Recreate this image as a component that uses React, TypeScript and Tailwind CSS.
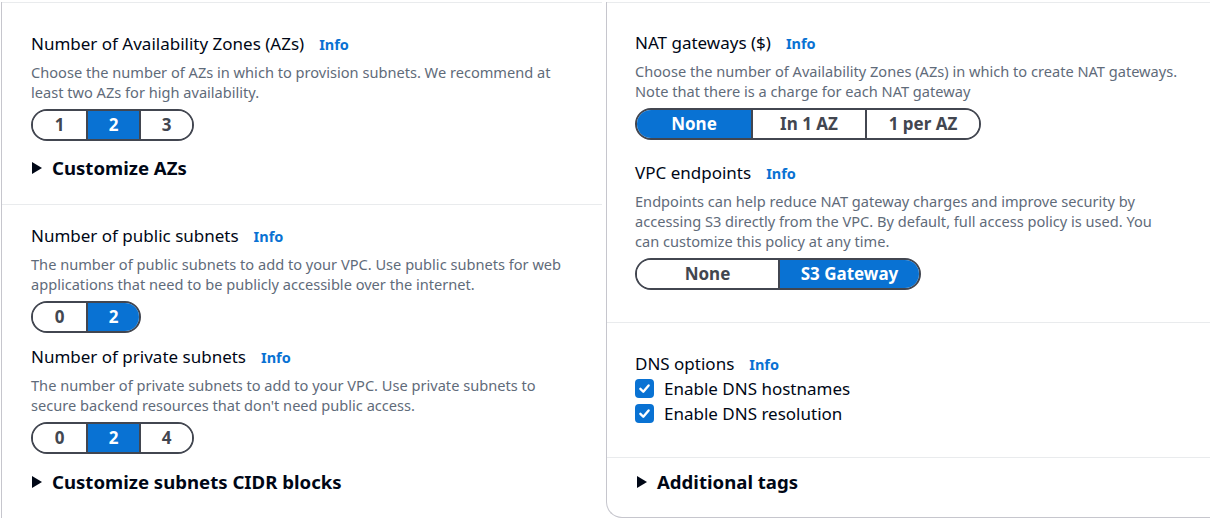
import React from "react";

const font = { fontFamily: '"Noto Sans", "Open Sans", Arial, sans-serif' };

function Info() {
  return <a className="ml-[15px] text-[14.5px] font-bold leading-[22px] text-[#0972d3]">Info</a>;
}

function Label({ children }: { children: React.ReactNode }) {
  return (
    <div className="flex items-baseline text-[17px] leading-[22px] text-[#000716]">
      <span>{children}</span>
      <Info />
    </div>
  );
}

function Desc({ children, className }: { children: React.ReactNode; className?: string }) {
  return (
    <p className={"mt-[7px] text-[14.6px] leading-[20px] text-[#5f6b7a] " + (className ?? "")}>{children}</p>
  );
}

interface SegmentedProps {
  options: string[];
  selected: number;
  segWidth: string;
  className?: string;
}

function Segmented({ options, selected, segWidth, className }: SegmentedProps) {
  return (
    <div className={"flex h-[32px] w-fit overflow-hidden rounded-full border-2 border-[#424650] " + (className ?? "")}>
      {options.map((opt, i) => (
        <div
          key={opt}
          className={
            "flex items-center justify-center text-[17px] font-bold " +
            segWidth +
            (i > 0 ? " border-l-2 border-[#424650]" : "") +
            (i === selected ? " bg-[#0972d3] text-white" : " bg-white text-[#424650]")
          }
        >
          {opt}
        </div>
      ))}
    </div>
  );
}

function Expand({ children, className }: { children: React.ReactNode; className?: string }) {
  return (
    <div className={"flex h-[24px] items-center " + (className ?? "")}>
      <svg width="12" height="14" viewBox="0 0 12 14" className="mr-[9px]">
        <polygon points="1,1 11,7 1,13" fill="#000716" />
      </svg>
      <span className="text-[18.6px] font-bold leading-[24px] text-[#000716]">{children}</span>
    </div>
  );
}

function Checkbox({ label }: { label: string }) {
  return (
    <div className="flex h-[25px] items-center">
      <span className="flex h-[19px] w-[19px] items-center justify-center rounded-[4px] bg-[#0972d3]">
        <svg width="13" height="13" viewBox="0 0 12 12">
          <path d="M2.2 6.3 L4.9 9 L9.8 3.2" fill="none" stroke="white" strokeWidth="2.2" strokeLinecap="round" strokeLinejoin="round" />
        </svg>
      </span>
      <span className="ml-[10px] text-[17px] leading-[22px] text-[#000716]">{label}</span>
    </div>
  );
}

export default function App() {
  return (
    <div className="h-[519px] w-[1210px] overflow-hidden bg-white pl-[1px] pt-[2px]" style={font}>
      <div className="flex">
        {/* Left column */}
        <div className="w-[601px] shrink-0 border-l border-[#c6c6cd]">
          <section className="h-[202px] border-t border-[#e9ebed] pl-[29px] pt-[30px]">
            <Label>Number of Availability Zones (AZs)</Label>
            <Desc className="w-[545px]">
              Choose the number of AZs in which to provision subnets. We recommend at least two AZs for high
              availability.
            </Desc>
            <Segmented options={["1", "2", "3"]} selected={1} segWidth="w-[53px]" className="mt-[7px]" />
            <Expand className="mt-[15px]">Customize AZs</Expand>
          </section>
          <section className="border-t border-[#e9ebed] pl-[29px] pt-[20px]">
            <Label>Number of public subnets</Label>
            <Desc className="w-[545px]">
              The number of public subnets to add to your VPC. Use public subnets for web applications that need to be
              publicly accessible over the internet.
            </Desc>
            <Segmented options={["0", "2"]} selected={1} segWidth="w-[53px]" className="mt-[7px]" />
            <div className="mt-[13px]">
              <Label>Number of private subnets</Label>
            </div>
            <Desc className="w-[545px]">
              The number of private subnets to add to your VPC. Use private subnets to secure backend resources that
              don't need public access.
            </Desc>
            <Segmented options={["0", "2", "4"]} selected={1} segWidth="w-[53px]" className="mt-[7px]" />
            <Expand className="mt-[16px]">Customize subnets CIDR blocks</Expand>
          </section>
        </div>

        {/* Right column */}
        <div className="ml-[4px] h-[516px] w-[620px] shrink-0 rounded-bl-[16px] border-b border-l border-[#c6c6cd]">
          <section className="h-[320px] border-t border-[#e9ebed] pl-[28px] pt-[29px]">
            <Label>NAT gateways ($)</Label>
            <Desc className="w-[543px]">
              Choose the number of Availability Zones (AZs) in which to create NAT gateways. Note that there is a
              charge for each NAT gateway
            </Desc>
            <Segmented options={["None", "In 1 AZ", "1 per AZ"]} selected={0} segWidth="w-[114px]" className="mt-[7px]" />
            <div className="mt-[22px]">
              <Label>VPC endpoints</Label>
            </div>
            <Desc className="w-[543px]">
              Endpoints can help reduce NAT gateway charges and improve security by accessing S3 directly from the
              VPC. By default, full access policy is used. You can customize this policy at any time.
            </Desc>
            <Segmented options={["None", "S3 Gateway"]} selected={1} segWidth="w-[141px]" className="mt-[7px]" />
          </section>
          <section className="h-[135px] border-t border-[#e9ebed] pl-[28px] pt-[30px]">
            <Label>DNS options</Label>
            <div className="mt-[1px] flex flex-col">
              <Checkbox label="Enable DNS hostnames" />
              <Checkbox label="Enable DNS resolution" />
            </div>
          </section>
          <section className="border-t border-[#e9ebed] pl-[29px] pt-[12px]">
            <Expand>Additional tags</Expand>
          </section>
        </div>
      </div>
    </div>
  );
}
